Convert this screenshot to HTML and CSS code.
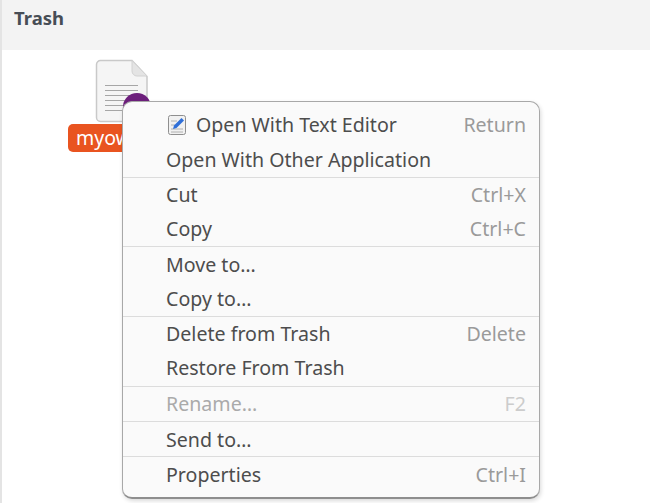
FILE: index.html
```html
<!DOCTYPE html>
<html lang="en">
<head>
<meta charset="utf-8">
<title>Trash</title>
<link rel="stylesheet" href="styles.css">
</head>
<body>
<div class="window">
  <header class="titlebar"><span class="title">Trash</span></header>
  <main class="files">
    <div class="file">
      <svg class="file-icon" width="56" height="65" viewBox="0 0 56 65" aria-hidden="true">
        <path d="M6.500 1.500H38L53 17.500V58.500a4 4 0 0 1-4 4H6.500a4 4 0 0 1-4-4V5.500a4 4 0 0 1 4-4Z" fill="#f5f5f5" stroke="#c9c9c9" stroke-width="1.500"/>
        <path d="M38 1.500V12a5 5 0 0 0 5 5H53Z" fill="#e4e4e4" stroke="#d2d2d2"/>
        <path d="M11 26.500H44M11 31.500H44M11 36.500H44M11 41.500H36M11 46.500H36M11 51.500H36" stroke="#a6a6a6" stroke-width="1"/>
        <circle cx="43" cy="48" r="14" fill="#6d1f7c"/>
      </svg>
      <span class="file-label">myown.txt</span>
    </div>
  </main>
  <nav class="menu">
    <section class="group">
      <div class="item tall"><span class="label"><svg class="edit-icon" width="22" height="22" viewBox="0 0 22 22" aria-hidden="true">
        <rect x="2.500" y="1.500" width="17" height="19" rx="2" fill="#f1f1f1" stroke="#8f8f8f"/>
        <path d="M5 7H11M5 11H9M5 15H17M5 18H17" stroke="#b0b0b0"/>
        <path d="M15.500 4L18 6.500L10.500 14L7 15L8 11.500Z" fill="#2f6fd8"/>
      </svg>Open With Text Editor</span><span class="key">Return</span></div>
      <div class="item tall"><span class="label">Open With Other Application</span></div>
    </section>
    <section class="group">
      <div class="item"><span class="label">Cut</span><span class="key">Ctrl+X</span></div>
      <div class="item"><span class="label">Copy</span><span class="key">Ctrl+C</span></div>
    </section>
    <section class="group">
      <div class="item"><span class="label">Move to…</span></div>
      <div class="item"><span class="label">Copy to…</span></div>
    </section>
    <section class="group">
      <div class="item"><span class="label">Delete from Trash</span><span class="key">Delete</span></div>
      <div class="item"><span class="label">Restore From Trash</span></div>
    </section>
    <section class="group">
      <div class="item disabled"><span class="label">Rename…</span><span class="key">F2</span></div>
    </section>
    <section class="group">
      <div class="item"><span class="label">Send to…</span></div>
    </section>
    <section class="group">
      <div class="item"><span class="label">Properties</span><span class="key">Ctrl+I</span></div>
    </section>
  </nav>
</div>
</body>
</html>
```
FILE: styles.css
```css
* { box-sizing: border-box; }
html, body { margin: 0; height: 100%; background: #fff; overflow: hidden; }
body { font-family: "Noto Sans", "Open Sans", sans-serif; color: #4a4a4a; }
.window {
  position: relative;
  width: 650px;
  height: 503px;
  border-left: 2px solid #e4e4e4;
  display: flex;
  flex-direction: column;
}
.titlebar {
  height: 50px;
  flex: none;
  background: #f3f3f3;
  padding: 5px 0 0 12px;
}
.title { font-size: 18.500px; font-weight: 700; color: #474d55; line-height: 26px; }
.files { flex: 1; background: #fff; }
.file {
  position: absolute;
  left: 66px;
  top: 59px;
  width: 108px;
  display: flex;
  flex-direction: column;
  align-items: center;
}
.file-icon { display: block; }
.file-label {
  width: 100%;
  height: 28px;
  background: #e95420;
  color: #fff;
  border-radius: 5px;
  font-size: 19.500px;
  line-height: 27px;
  padding-left: 8px;
  white-space: nowrap;
}
.menu {
  position: absolute;
  left: 120px;
  top: 101px;
  width: 418px;
  height: 398px;
  background: #fafafa;
  border: 1px solid #a8a8a8;
  border-bottom: 2px solid #8e8e8e;
  border-radius: 10px;
  box-shadow: 1px 2px 4px rgba(0,0,0,.15);
  padding-top: 6px;
  display: flex;
  flex-direction: column;
}
.group { border-bottom: 1px solid #dcdcdc; }
.group:last-child { border-bottom: 0; }
.group:nth-child(1) { height: 70px; }
.group:nth-child(2) { height: 69px; }
.group:nth-child(3) { height: 70px; padding-top: 1px; }
.group:nth-child(4) { height: 70px; }
.group:nth-child(5) { height: 35px; }
.group:nth-child(6) { height: 35px; padding-top: 1px; }
.group:nth-child(7) { padding-top: 1px; }
.item {
  height: 34px;
  padding: 0 13px 2px 43px;
  display: flex;
  justify-content: space-between;
  align-items: center;
  font-size: 19.600px;
  color: #4d4d4d;
}
.tall { height: 35px; }
.label { display: flex; align-items: center; white-space: nowrap; }
.edit-icon { margin-right: 8px; flex: none; }
.key { color: #9a9a9a; white-space: nowrap; }
.disabled .label { color: #aaaaaa; }
.disabled .key { color: #cccccc; }
```
